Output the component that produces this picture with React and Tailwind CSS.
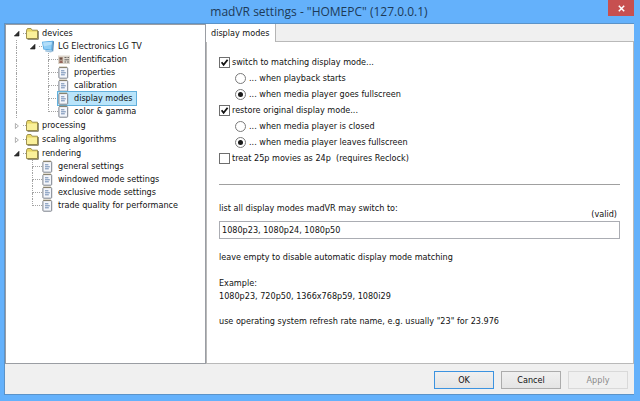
import React, { useState } from 'react';

const treeData = [
  {
    id: 'devices',
    label: 'devices',
    icon: 'folder',
    open: true,
    children: [
      {
        id: 'lg',
        label: 'LG Electronics LG TV',
        icon: 'monitor',
        open: true,
        children: [
          { id: 'identification', label: 'identification', icon: 'card' },
          { id: 'properties', label: 'properties', icon: 'page' },
          { id: 'calibration', label: 'calibration', icon: 'page' },
          { id: 'modes', label: 'display modes', icon: 'page' },
          { id: 'gamma', label: 'color & gamma', icon: 'page' },
        ],
      },
    ],
  },
  { id: 'processing', label: 'processing', icon: 'folder', children: [] },
  { id: 'scaling', label: 'scaling algorithms', icon: 'folder', children: [] },
  {
    id: 'rendering',
    label: 'rendering',
    icon: 'folder',
    open: true,
    children: [
      { id: 'general', label: 'general settings', icon: 'page' },
      { id: 'windowed', label: 'windowed mode settings', icon: 'page' },
      { id: 'exclusive', label: 'exclusive mode settings', icon: 'page' },
      { id: 'trade', label: 'trade quality for performance', icon: 'page' },
    ],
  },
];

const NodeIcon = ({ type }) => {
  if (type === 'folder') {
    return (
      <svg className="h-[13px] w-[13px] shrink-0" viewBox="0 0 13 13">
        <path d="M0.5 11.5V3.2L1.5 1.5H5L6.2 3.2H11.5V11.5Z" fill="#e9d765" stroke="#a09350" />
        <path d="M1 4.6H11V11H1Z" fill="#faf09a" />
        <path d="M12.3 4V12.3H1.5" fill="none" stroke="#5b5436" strokeWidth="0.8" />
      </svg>
    );
  }
  if (type === 'monitor') {
    return (
      <svg className="h-[13px] w-[13px] shrink-0" viewBox="0 0 13 13">
        <path d="M0 1.8L10.8 0.8L10.2 10.8L1.4 9.6Z" fill="#4fa6e2" />
        <path d="M1 2.6L9.8 1.8L9.3 9.7L2.1 8.7Z" fill="#8fcdf5" />
        <path d="M1 2.6L9.8 1.8L9.6 4.6L1.7 6.6Z" fill="#b3def9" />
        <path d="M10.8 0.8L11.9 1.6L11.2 11.4L10.2 10.8Z" fill="#3576ab" />
        <path d="M3.4 9.9L10.2 10.8L11.2 11.4L8.6 12.4L3.2 11.4Z" fill="#9fc3de" />
      </svg>
    );
  }
  if (type === 'card') {
    return (
      <svg className="h-[13px] w-[13px] shrink-0" viewBox="0 0 13 13">
        <rect x="0" y="2.5" width="12" height="8.5" fill="#ddd6cc" />
        <rect x="1" y="4" width="4" height="6" fill="#b39a8b" />
        <circle cx="3" cy="5.6" r="1.2" fill="#6b4f45" />
        <path d="M1.4 9.8Q3 6.2 4.8 9.8Z" fill="#8a4f47" />
        <path d="M6.5 4.5H8.5M9.5 4.5H11M6.5 6.8H11M6.5 9H8M9 9H11" stroke="#6d6a66" />
      </svg>
    );
  }
  return (
    <svg className="h-[13px] w-[13px] shrink-0" viewBox="0 0 13 13">
      <rect x="0.9" y="1.6" width="8.8" height="10.6" rx="0.8" fill="#f4f6fb" stroke="#7b808a" />
      <path d="M1.5 1.3H9.4" stroke="#8a7a4a" strokeWidth="1.6" strokeDasharray="1 1" />
      <path d="M3 4.8H6.4M3 6.8H7.8M3 8.8H6.8" stroke="#5e7ea8" strokeWidth="0.9" />
    </svg>
  );
};

// vertical line with a branch towards the node, half of it for the last child
const Guide = ({ branch, line, last }) => (
  <span className="flex w-4 shrink-0 flex-col pl-[6px]">
    <span
      className={`h-[7px] border-dotted border-[#a3a3a3] ${branch ? 'border-b' : ''} ${line ? 'border-l' : ''}`}
    />
    <span className={`h-[6px] border-dotted border-[#a3a3a3] ${line && !last ? 'border-l' : ''}`} />
  </span>
);

const TreeNode = ({ node, guides, last, selected, onSelect }) => {
  const [open, setOpen] = useState(Boolean(node.open));
  const isSelected = selected === node.id;

  return (
    <li role="treeitem" aria-expanded={node.children ? open : undefined} aria-selected={isSelected}>
      <div className="flex h-[13px]">
        {guides.map((line, i) => (
          <Guide key={i} line={line} />
        ))}
        {node.children ? (
          <span className="flex w-4 shrink-0 items-center gap-[3px] pl-1">
            <button type="button" aria-label={`toggle ${node.label}`} onClick={() => setOpen(!open)}>
              <svg className="block h-[6px] w-[6px]" viewBox="0 0 6 6">
                {open ? (
                  <path d="M5 0.3V5H0.3Z" fill="#333" stroke="#111" strokeWidth="0.6" />
                ) : (
                  <path d="M1.4 0.5L4.4 3L1.4 5.5Z" fill="#fff" stroke="#9a9a9a" strokeWidth="0.8" />
                )}
              </svg>
            </button>
            <span className="w-[3px] border-b border-dotted border-[#a3a3a3]" />
          </span>
        ) : (
          <Guide line branch last={last} />
        )}
        <button
          type="button"
          onClick={() => onSelect(node.id)}
          className={`flex items-center gap-[3px] whitespace-nowrap pr-[3px] ${
            isSelected ? 'bg-[#b9e4fa] outline outline-[#62b0dc]' : ''
          }`}
        >
          <NodeIcon type={node.icon} />
          {node.label}
        </button>
      </div>
      {open && node.children && node.children.length > 0 && (
        <ul role="group">
          {node.children.map((child, i) => (
            <TreeNode
              key={child.id}
              node={child}
              guides={[...guides, !last && guides.length === 0]}
              last={i === node.children.length - 1}
              selected={selected}
              onSelect={onSelect}
            />
          ))}
        </ul>
      )}
    </li>
  );
};

const CheckOption = ({ label, checked, onChange }) => (
  <label className="flex h-4 items-center gap-[2px]">
    <span className="relative h-[11px] w-[11px]">
      <input
        type="checkbox"
        checked={checked}
        onChange={(e) => onChange(e.target.checked)}
        className="peer block h-[11px] w-[11px] appearance-none border border-[#6e6e6e] bg-white"
      />
      <svg
        className="pointer-events-none absolute inset-0 hidden h-[11px] w-[11px] peer-checked:block"
        viewBox="0 0 11 11"
      >
        <path d="M2.6 5.3L4.6 7.8L8.6 2.8" fill="none" stroke="#111" strokeWidth="1.8" />
      </svg>
    </span>
    <span className="whitespace-pre">{label}</span>
  </label>
);

const RadioOption = ({ name, label, checked, onChange }) => (
  <label className="ml-4 flex h-4 items-center gap-[3px]">
    <span className="relative h-[11px] w-[11px]">
      <input
        type="radio"
        name={name}
        checked={checked}
        onChange={onChange}
        className="peer block h-[11px] w-[11px] appearance-none rounded-full border border-[#7a7a7a] bg-white"
      />
      <span className="pointer-events-none absolute inset-[3px] hidden rounded-full bg-[#1a1a1a] peer-checked:block" />
    </span>
    {label}
  </label>
);

const App = () => {
  const [selected, setSelected] = useState('modes');
  const [switchMode, setSwitchMode] = useState(true);
  const [switchWhen, setSwitchWhen] = useState('fullscreen');
  const [restoreMode, setRestoreMode] = useState(true);
  const [restoreWhen, setRestoreWhen] = useState('leaves');
  const [treat25p, setTreat25p] = useState(false);
  const [modes, setModes] = useState('1080p23, 1080p24, 1080p50');

  return (
    <div className="flex min-h-screen flex-col bg-[#64b1fb] pr-[6px] pb-[6px] pl-1 font-['DejaVu_Sans_Condensed','Noto_Sans',sans-serif] text-[9px] leading-[13px] text-[#111]">
      {/* Title bar */}
      <header className="relative flex h-[23px] items-center justify-center">
        <h1 className="font-['Open_Sans',sans-serif] text-[12px] leading-4 text-[#1d3a58]">
          madVR settings - "HOMEPC" (127.0.0.1)
        </h1>
        <button
          type="button"
          aria-label="Close"
          className="absolute top-0 right-0 flex h-4 w-[26px] items-center justify-center bg-[#c75050]"
        >
          <svg className="h-[7px] w-[7px]" viewBox="0 0 7 7">
            <path d="M0.8 0.8L6.2 6.2M6.2 0.8L0.8 6.2" stroke="#fff" strokeWidth="1.5" />
          </svg>
        </button>
      </header>

      <div className="flex flex-1 flex-col border border-r-0 border-[#5b93c8] bg-[#f0f0f0]">
        <div className="flex flex-1">
          {/* Settings tree */}
          <nav className="w-[201px] shrink-0 border border-[#9a9da3] bg-white pt-[2px] pl-1">
            <ul role="tree" className="space-y-px">
              {treeData.map((node, i) => (
                <TreeNode
                  key={node.id}
                  node={node}
                  guides={[]}
                  last={i === treeData.length - 1}
                  selected={selected}
                  onSelect={setSelected}
                />
              ))}
            </ul>
          </nav>

          {/* Tab page */}
          <main className="flex flex-1 flex-col">
            <div role="tablist" className="flex h-[17px]">
              <button
                type="button"
                role="tab"
                aria-selected="true"
                className="z-10 -mb-px border-r border-[#b4b4b4] bg-white px-[5px]"
              >
                display modes
              </button>
            </div>
            <div
              role="tabpanel"
              className="flex-1 border border-[#b9b9b9] bg-white pt-3 pr-[13px] pl-3"
            >
              <CheckOption
                label="switch to matching display mode..."
                checked={switchMode}
                onChange={setSwitchMode}
              />
              <RadioOption
                name="switch"
                label="... when playback starts"
                checked={switchWhen === 'playback'}
                onChange={() => setSwitchWhen('playback')}
              />
              <RadioOption
                name="switch"
                label="... when media player goes fullscreen"
                checked={switchWhen === 'fullscreen'}
                onChange={() => setSwitchWhen('fullscreen')}
              />
              <CheckOption
                label="restore original display mode..."
                checked={restoreMode}
                onChange={setRestoreMode}
              />
              <RadioOption
                name="restore"
                label="... when media player is closed"
                checked={restoreWhen === 'closed'}
                onChange={() => setRestoreWhen('closed')}
              />
              <RadioOption
                name="restore"
                label="... when media player leaves fullscreen"
                checked={restoreWhen === 'leaves'}
                onChange={() => setRestoreWhen('leaves')}
              />
              <CheckOption
                label="treat 25p movies as 24p  (requires Reclock)"
                checked={treat25p}
                onChange={setTreat25p}
              />

              <hr className="mt-[18px] border-[#a0a0a0]" />

              <div className="mt-[17px] flex justify-between">
                <label htmlFor="modes">list all display modes madVR may switch to:</label>
                <span className="pt-[6px] pr-[3px]">(valid)</span>
              </div>
              <input
                id="modes"
                type="text"
                value={modes}
                onChange={(e) => setModes(e.target.value)}
                className="block h-[18px] w-full border border-[#abadb3] bg-white px-[2px] outline-none"
              />

              <p className="mt-3">leave empty to disable automatic display mode matching</p>
              <p className="mt-[13px]">Example:</p>
              <p>1080p23, 720p50, 1366x768p59, 1080i29</p>
              <p className="mt-3">use operating system refresh rate name, e.g. usually "23" for 23.976</p>
            </div>
          </main>
        </div>

        {/* Dialog buttons */}
        <footer className="flex justify-end gap-[7px] pt-[7px] pr-[6px] pb-[5px]">
          <button
            type="button"
            className="h-[18px] w-[60px] border border-[#3c93e0] bg-linear-to-b from-[#f0f0f0] to-[#e4e4e4]"
          >
            OK
          </button>
          <button
            type="button"
            className="h-[18px] w-[60px] border border-[#acacac] bg-linear-to-b from-[#f0f0f0] to-[#e4e4e4]"
          >
            Cancel
          </button>
          <button type="button" disabled className="h-[18px] w-[60px] border border-[#d9d9d9] text-[#8a8a8a]">
            Apply
          </button>
        </footer>
      </div>
    </div>
  );
};

export default App;
